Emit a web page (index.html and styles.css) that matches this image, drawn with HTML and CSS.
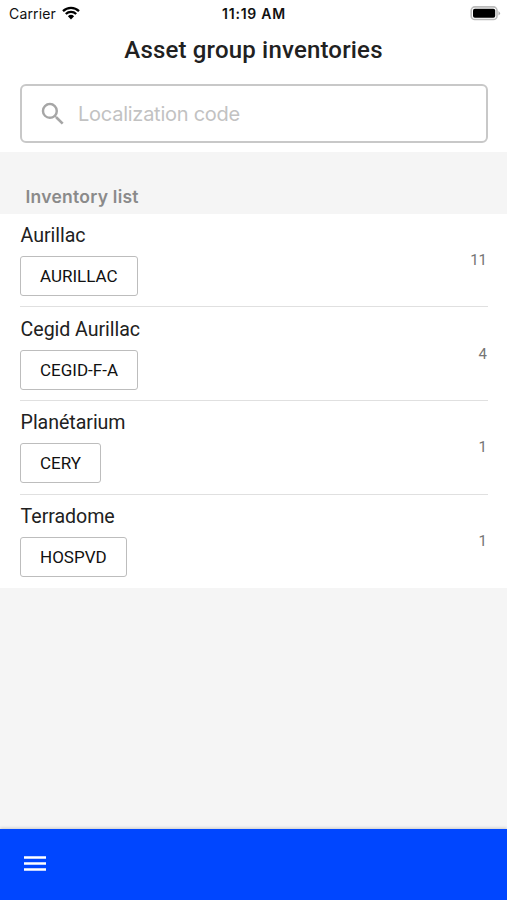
FILE: index.html
```html
<!DOCTYPE html>
<html lang="en">
<head>
    <meta charset="UTF-8">
    <meta name="viewport" content="width=device-width, initial-scale=1.0">
    <title>Asset group inventories</title>
    <link rel="stylesheet" href="styles.css">
</head>
<body>
    <header class="header">
        <div class="statusBar">
            <div class="carrier">
                <span>Carrier</span>
                <svg class="wifi" width="18" height="14" viewBox="0 0 18 14">
                    <path d="M1 5.1a11.6 11.6 0 0 1 16 0M3.8 8a7.5 7.5 0 0 1 10.4 0" fill="none" stroke="#000" stroke-width="2.3"/>
                    <path d="M5.9 10.2a4.5 4.5 0 0 1 6.2 0L9 13.6z"/>
                </svg>
            </div>
            <div class="time">11:19 AM</div>
            <div class="battery">
                <svg width="32" height="16" viewBox="0 0 32 16">
                    <rect x="2.2" y="1.9" width="25.8" height="12.6" rx="3.6" fill="#fff" stroke="#bbb" stroke-width="1.6"/>
                    <rect x="4" y="3.7" width="22.2" height="9" rx="1.8"/>
                    <path d="M29.5 5.9q3 2.3 0 4.6z" fill="#aaa"/>
                </svg>
            </div>
        </div>
        <h1 class="title">Asset group inventories</h1>
        <div class="search">
            <svg class="searchIcon" width="30" height="30" viewBox="0 0 24 24">
                <path fill="#a6a6a6" d="M15.5 14h-.79l-.28-.27A6.47 6.47 0 0 0 16 9.5 6.5 6.5 0 1 0 9.5 16c1.61 0 3.09-.59 4.23-1.57l.27.28v.79l5 4.99L20.49 19l-4.99-5zm-6 0C7.01 14 5 11.99 5 9.5S7.01 5 9.5 5 14 7.01 14 9.5 11.99 14 9.5 14z"/>
            </svg>
            <input type="text" class="searchInput" placeholder="Localization code">
        </div>
    </header>

    <main class="content">
        <h2 class="listTitle">Inventory list</h2>
        <ul class="list">
            <li class="item">
                <div class="info">
                    <div class="name">Aurillac</div>
                    <div class="code">AURILLAC</div>
                </div>
                <span class="count">11</span>
            </li>
            <li class="item">
                <div class="info">
                    <div class="name">Cegid Aurillac</div>
                    <div class="code">CEGID-F-A</div>
                </div>
                <span class="count">4</span>
            </li>
            <li class="item">
                <div class="info">
                    <div class="name">Planétarium</div>
                    <div class="code">CERY</div>
                </div>
                <span class="count">1</span>
            </li>
            <li class="item">
                <div class="info">
                    <div class="name">Terradome</div>
                    <div class="code">HOSPVD</div>
                </div>
                <span class="count">1</span>
            </li>
        </ul>
    </main>

    <footer class="footer">
        <button class="menu" aria-label="Menu">
            <svg width="24" height="18" viewBox="0 0 24 18">
                <path d="M1 2.5h22M1 8.5h22M1 14.5h22" stroke="#fff" stroke-width="2.4"/>
            </svg>
        </button>
    </footer>
</body>
</html>
```

FILE: styles.css
```css
*
{
    box-sizing: border-box;
    margin: 0;
    padding: 0;
}

body
{
    display: flex;
    flex-direction: column;
    height: 100vh;
    font-family: Roboto, sans-serif;
    background: #f5f5f5;
    color: #212121;
}

.header
{
    height: 152px;
    background: #fff;
}

.statusBar
{
    display: grid;
    grid-template-columns: 1fr auto 1fr;
    align-items: center;
    height: 27px;
    padding: 0 6px 0 9px;
    font-family: Inter, sans-serif;
    font-size: 14px;
    color: #111;
}

.carrier
{
    display: flex;
    align-items: center;
    gap: 6px;
    letter-spacing: 0.15px;
}

.wifi
{
    margin-top: -2px;
}

.time
{
    font-weight: 600;
    letter-spacing: 0.75px;
    margin-right: 2px;
}

.battery
{
    display: flex;
    justify-content: flex-end;
    margin-top: -2px;
}

.title
{
    height: 57px;
    line-height: 46px;
    font-size: 24px;
    font-weight: 500;
    letter-spacing: 0.18px;
    text-align: center;
}

.search
{
    display: flex;
    align-items: center;
    gap: 10px;
    height: 59px;
    margin: 0 19px 0 20px;
    padding: 0 16px;
    border: 2px solid #c8c8c8;
    border-radius: 6px;
}

.searchInput
{
    flex: 1;
    min-width: 0;
    height: 40px;
    border: none;
    outline: none;
    background: none;
    font-family: Inter, sans-serif;
    font-size: 20px;
    letter-spacing: -0.25px;
    color: #212121;
}

.searchInput::placeholder
{
    color: #c2c2c2;
}

.content
{
    flex: 1;
}

.listTitle
{
    height: 61.5px;
    padding: 33px 25.5px 0;
    line-height: 24px;
    font-family: Inter, sans-serif;
    font-size: 17.5px;
    font-weight: 600;
    letter-spacing: 0.25px;
    color: #8a8a8a;
}

.list
{
    padding: 0 19px 0 20px;
    list-style: none;
    background: #fff;
}

.item
{
    display: flex;
    justify-content: space-between;
    align-items: center;
    height: 93.7px;
    border-bottom: 1px solid #e0e0e0;
}

.item:last-child
{
    border-bottom: none;
}

.name
{
    height: 33px;
    padding-left: 0.6px;
    line-height: 26px;
    font-size: 19.6px;
    letter-spacing: -0.05px;
}

.code
{
    display: inline-block;
    height: 40px;
    margin-bottom: 1px;
    padding: 0 19px;
    line-height: 38px;
    border: 1.5px solid #bdbdbd;
    border-radius: 3px;
    font-size: 17px;
    color: #111;
}

.count
{
    padding-right: 1px;
    font-size: 15px;
    color: #757575;
}

.footer
{
    display: flex;
    height: 71px;
    padding: 26px 23px;
    background: #0046ff;
    box-shadow: 0 -1px 3px rgba(0, 0, 0, 0.18);
}

.menu
{
    display: flex;
    height: 18px;
    border: none;
    background: none;
}
```
